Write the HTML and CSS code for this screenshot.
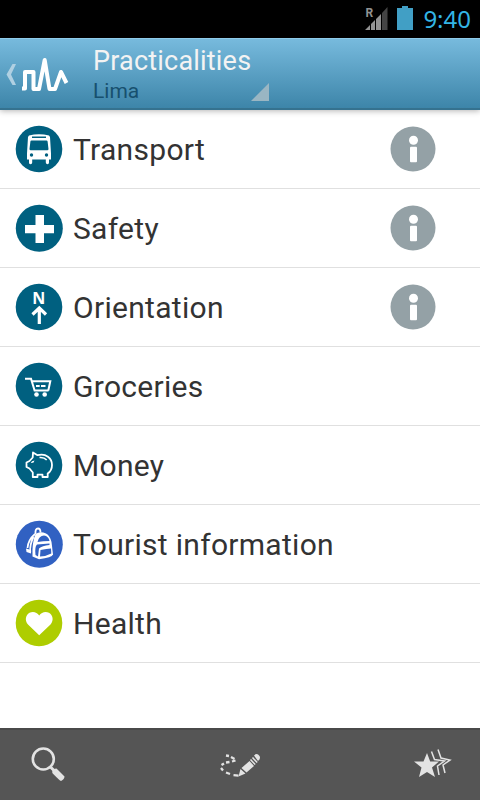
FILE: index.html
```
<!DOCTYPE html>
<html lang="en">
<head>
  <meta charset="UTF-8" />
  <title>Practicalities - Lima</title>
  <link rel="stylesheet" href="styles.css">
</head>
<body>
  <div class="status-bar">
    <svg class="signal" width="24" height="24" viewBox="0 0 24 24">
      <path d="M0 23L5 18V23Z M6 17L10 13V23H6Z M11 12L16 7V23H11Z" fill="#929292" />
      <path d="M17 6L22.500 0V23H17Z" fill="#444" />
      <text x="0.500" y="10" class="roaming">R</text>
    </svg>
    <svg class="battery" width="16" height="24" viewBox="0 0 16 24">
      <path d="M5 0H11V2H16V24H0V2H5Z" fill="#419fc5" />
    </svg>
    <span class="clock">9:40</span>
  </div>

  <div class="header">
    <svg class="logo" width="72" height="72" viewBox="0 0 72 72">
      <path d="M12.500 26H16L11 36.500L16 47H12.500L6.500 36.500Z" fill="#b0d0e2" />
      <path d="M22 50.500H25V34H33.500V51H39L44.700 22L49.500 51H55L61 34L66.500 45" fill="none" stroke="#fff" stroke-width="4" stroke-linejoin="round" />
    </svg>
    <div class="spinner">
      <div class="title">Practicalities</div>
      <div class="subtitle">Lima</div>
      <svg class="corner" width="18" height="18" viewBox="0 0 18 18">
        <path d="M0 18L18 0V18Z" fill="#9ab6c3" />
      </svg>
    </div>
  </div>

  <div class="list">
    <div class="row">
      <svg class="icon" viewBox="0 0 48 48">
        <circle cx="24" cy="24" r="23.300" fill="#006080" />
        <path d="M14 10.500Q24 8 34 10.500L35 12L36 28.500V34.500H34V37.500Q34 39.300 32.500 39.300T30.800 37.500V34.500H17.200V37.500Q17.200 39.300 15.500 39.300T14 37.500V34.500H12V28.500L13 12Z" fill="#fff" />
        <path d="M17 11.500H31V13H17Z M16.500 15.500H31.500Q32.500 15.500 32.600 16.500L33.500 24Q33.500 25.300 32.300 25.300H15.700Q14.500 25.300 14.500 24L15.400 16.500Q15.500 15.500 16.500 15.500Z" fill="#006080" />
        <circle cx="16.500" cy="30" r="1.700" fill="#006080" />
        <circle cx="31.500" cy="30" r="1.700" fill="#006080" />
      </svg>
      <span class="label">Transport</span>
      <svg class="info" viewBox="0 0 46 46">
        <circle cx="23" cy="23" r="22.500" fill="#94a1a6" />
        <circle cx="23.500" cy="14.300" r="4.500" fill="#fff" />
        <rect x="20" y="20.700" width="7" height="15.500" rx="1" fill="#fff" />
      </svg>
    </div>
    <div class="row">
      <svg class="icon" viewBox="0 0 48 48">
        <circle cx="24.300" cy="24.300" r="23.500" fill="#006080" />
        <path d="M20.500 11H29V21H39V29.300H29V39H20.500V29.300H10V21H20.500Z" fill="#fff" />
      </svg>
      <span class="label">Safety</span>
      <svg class="info" viewBox="0 0 46 46">
        <circle cx="23" cy="23" r="22.500" fill="#94a1a6" />
        <circle cx="23.500" cy="14.300" r="4.500" fill="#fff" />
        <rect x="20" y="20.700" width="7" height="15.500" rx="1" fill="#fff" />
      </svg>
    </div>
    <div class="row">
      <svg class="icon" viewBox="0 0 48 48">
        <circle cx="24" cy="24" r="23.300" fill="#006080" />
        <text x="23.800" y="20.500" class="north">N</text>
        <path d="M24.300 41V25.500M17.500 31.500L24.300 25L31 31.500" fill="none" stroke="#fff" stroke-width="3.200" />
      </svg>
      <span class="label">Orientation</span>
      <svg class="info" viewBox="0 0 46 46">
        <circle cx="23" cy="23" r="22.500" fill="#94a1a6" />
        <circle cx="23.500" cy="14.300" r="4.500" fill="#fff" />
        <rect x="20" y="20.700" width="7" height="15.500" rx="1" fill="#fff" />
      </svg>
    </div>
    <div class="row">
      <svg class="icon" viewBox="0 0 48 48">
        <circle cx="24" cy="24" r="23.300" fill="#006080" />
        <path d="M10 16.800H16L19.600 28.500H33.500M17 19.300H35.300L33.300 28.500" fill="none" stroke="#fff" stroke-width="2" />
        <path d="M21 24H24.700M26 24H30.500" stroke="#fff" stroke-width="2" />
        <circle cx="21.500" cy="32.500" r="2.300" fill="#fff" />
        <circle cx="29.700" cy="32.500" r="2.300" fill="#fff" />
      </svg>
      <span class="label">Groceries</span>
    </div>
    <div class="row">
      <svg class="icon" viewBox="0 0 48 48">
        <circle cx="24" cy="24" r="23.300" fill="#006080" />
        <path d="M18 11.500L22.500 14.200C31 12 37 17 37 24C37 28.500 35 31 32.700 32.500V36H27.500V33.700H22.500V36H17.800V31.500L14.500 27.500L11.500 26V21.500L14.500 20L17.700 16.500Z" fill="none" stroke="#fff" stroke-width="1.800" stroke-linejoin="round" />
        <path d="M24.500 16.500Q29 16 31.700 19" fill="none" stroke="#fff" stroke-width="1.600" />
        <path d="M15.800 22Q16.500 19.500 19.500 19.500Q19 22.500 15.800 22Z" fill="#fff" />
      </svg>
      <span class="label">Money</span>
    </div>
    <div class="row">
      <svg class="icon" viewBox="0 0 48 48">
        <circle cx="24.300" cy="24.300" r="23.500" fill="#3161c2" />
        <path d="M20.500 14Q20 8.500 23 8.500Q25.500 8.500 25.500 12.500" fill="none" stroke="#fff" stroke-width="1.800" />
        <path d="M20.500 14Q25 11 31 13.500Q35 15.500 36.500 22L38 34.500Q37 37.500 24 39.300L17.500 36.500Q17 22 20.500 14Z" fill="#fff" />
        <path d="M20 14Q13 20 12.500 28M18.500 17Q14.500 25 15.300 32" fill="none" stroke="#fff" stroke-width="1.700" />
        <path d="M11 28.500L16 30V33.500L11.500 32Z" fill="#fff" />
        <path d="M22.500 22Q24 15.500 29 15.500Q33.500 16 34.500 21Q28 21 22.500 22ZM20.500 35Q19.500 27 22 24.500L34.500 23.500V25Q27 25.500 24 28.500L23 36.500ZM25.500 30Q32 28.500 36 28.500L36.300 33.500Q32 36 25 36.500Z" fill="#3161c2" />
      </svg>
      <span class="label">Tourist information</span>
    </div>
    <div class="row">
      <svg class="icon" viewBox="0 0 48 48">
        <circle cx="24" cy="24" r="23.300" fill="#aecd00" />
        <path d="M24.200 36.300L13 25.500C9.500 21.500 10.500 16 14.500 13.700C18 12 22 13 24.200 16.500C26.500 13 30.500 12 34 13.700C38 16 39 21.500 35.500 25.500Z" fill="#fff" />
      </svg>
      <span class="label">Health</span>
    </div>
  </div>

  <div class="toolbar">
    <svg width="36" height="36" viewBox="0 0 36 36">
      <circle cx="12.300" cy="12" r="10.500" fill="none" stroke="#e3e3e3" stroke-width="2.600" />
      <path d="M19.500 20L23 23.500" stroke="#e3e3e3" stroke-width="3" />
      <path d="M21.300 24Q22 21.500 25.500 21.500L33.500 29.500Q33.500 32 30 34Q28 33 21.300 26Z" fill="#e3e3e3" />
    </svg>
    <svg width="42" height="36" viewBox="0 0 42 36">
      <path d="M6 8.500L9 9M11 10L14.500 12M15.500 13.500L12 14.500M9.500 15L6 15.500M4 16.500L1.500 18M1 21L3 23.500M6 25.500L10 27M13.500 28.200L18.500 28.700" fill="none" stroke="#e3e3e3" stroke-width="2.300" />
      <path d="M18.500 29.500L20.500 22L25.500 26.500Z M21.500 21L29.500 14L34 19L26.500 25.500Z M34 8.500Q37 5.500 39.500 9Q41 11.500 38 14Z" fill="#e3e3e3" />
      <path d="M30.500 12.500L35.200 17.600M32.500 10.500L37.200 15.600" stroke="#e3e3e3" stroke-width="1.500" />
    </svg>
    <svg width="38" height="36" viewBox="0 0 38 36">
      <path d="M13 6L16.200 14.500H25L18 20.500L21 30L13 25L5 30L7.500 20.500L0 14.500H9.500Z" fill="#e3e3e3" />
      <path d="M17.500 4.500L20.500 12.500L30.500 14L23.500 19L25 28M24 2.500L27 11L36 13L29 18L31 26" fill="none" stroke="#e3e3e3" stroke-width="1.500" />
    </svg>
  </div>
</body>
</html>
```

FILE: styles.css
```
body {
  font-family: Roboto, sans-serif;
  margin: 0;
  height: 800px;
  display: flex;
  flex-direction: column;
  background: #ffffff;
  overflow: hidden;
}

.status-bar {
  height: 38px;
  box-sizing: border-box;
  padding-right: 9px;
  display: flex;
  align-items: center;
  justify-content: flex-end;
  background: #000;
}

.battery {
  margin: 0 10px 2px 8px;
}

.signal {
  margin-bottom: 1px;
}

.roaming {
  font-size: 12px;
  font-weight: bold;
  fill: #929292;
}

.clock {
  font-family: "Noto Sans", sans-serif;
  font-size: 24px;
  line-height: 38px;
  color: #33b5e5;
}

.header {
  height: 72px;
  flex-shrink: 0;
  box-sizing: border-box;
  display: flex;
  background: linear-gradient(#77badd, #3d85a9);
  border-top: 1px solid #8fcbea;
  border-bottom: 2px solid #35728f;
  box-shadow: 0 1px 6px rgba(0, 0, 0, 0.3);
}

.logo {
  margin-top: -1px;
}

.spinner {
  position: relative;
  width: 177px;
  margin-left: 21px;
}

.title {
  margin-top: 5px;
  font-size: 27px;
  line-height: 34px;
  letter-spacing: 0.2px;
  color: #f3f3f3;
  white-space: nowrap;
}

.subtitle {
  font-size: 21px;
  line-height: 26px;
  color: #17506e;
}

.corner {
  position: absolute;
  right: 1px;
  bottom: 7px;
}

.list {
  flex: 1;
}

.row {
  height: 78px;
  padding: 0 44px 0 15px;
  display: flex;
  align-items: center;
  border-bottom: 1px solid #e0e0e0;
}

.icon {
  width: 48px;
  height: 48px;
}

.north {
  font-family: "Open Sans", sans-serif;
  font-size: 16px;
  font-weight: bold;
  text-anchor: middle;
  fill: #fff;
}

.label {
  flex: 1;
  margin-left: 10px;
  padding-top: 1px;
  font-size: 30px;
  letter-spacing: 0.3px;
  color: #333;
}

.info {
  width: 46px;
  height: 46px;
}

.toolbar {
  height: 72px;
  box-sizing: border-box;
  padding: 0 28px 0 31px;
  display: flex;
  align-items: center;
  justify-content: space-between;
  background: #555;
  border-top: 2px solid #4a4a4a;
}
```
